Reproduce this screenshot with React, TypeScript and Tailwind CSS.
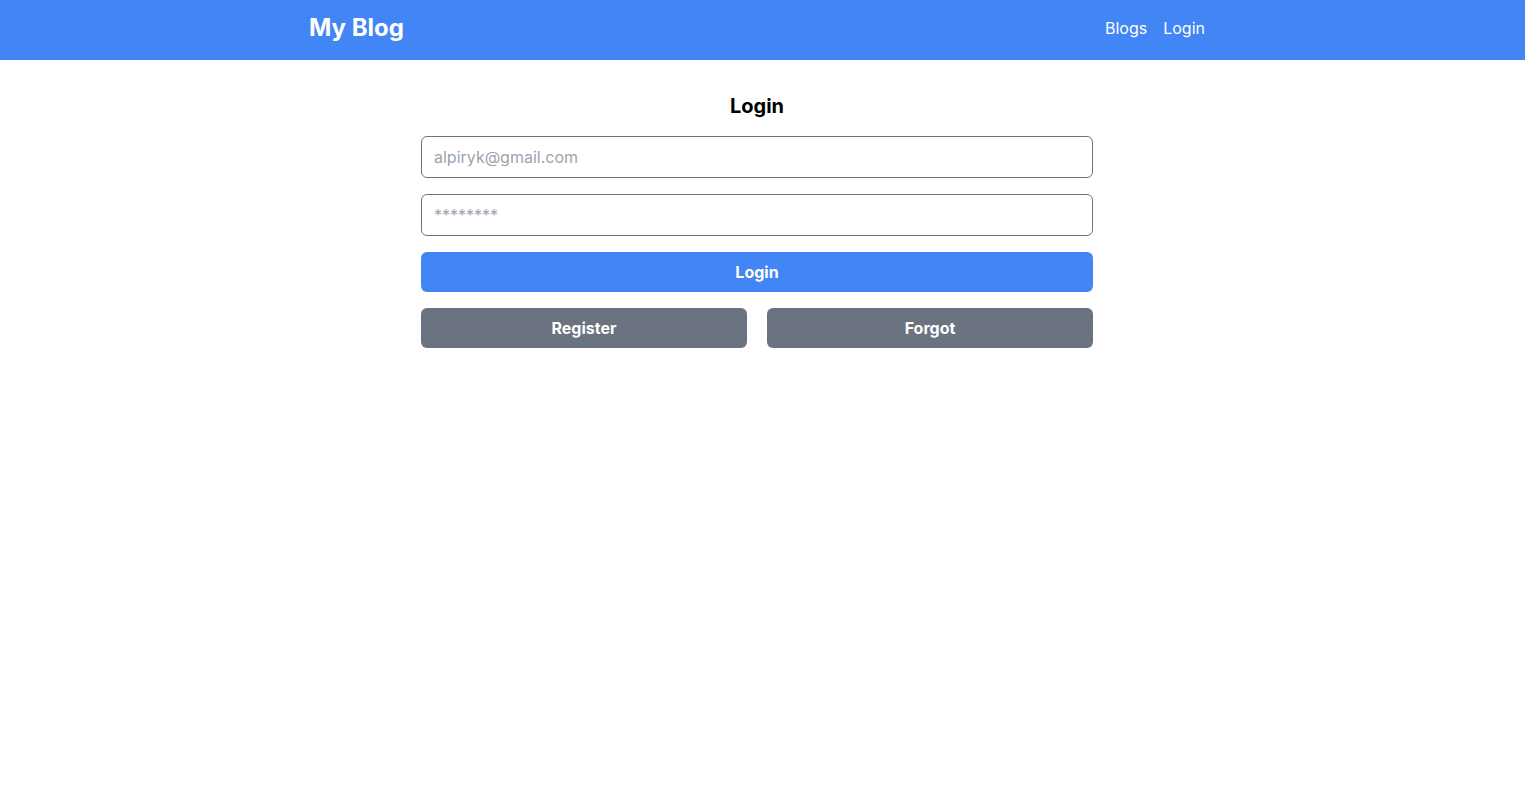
export default function App() {
  return (
    <div className="min-h-screen bg-white" style={{ fontFamily: "Inter, 'Noto Sans', sans-serif" }}>
      <header className="w-full bg-[#4285f4]">
        <div className="w-[1514px]">
          <div className="mx-auto flex h-[60px] max-w-4xl items-center justify-between pb-1">
            <span className="text-2xl font-bold text-white">My Blog</span>
            <nav className="flex gap-4 text-base text-white">
              <a>Blogs</a>
              <a>Login</a>
            </nav>
          </div>
        </div>
      </header>
      <main className="w-[1514px]">
        <div className="mx-auto max-w-2xl pt-8">
          <h1 className="mb-4 text-center text-xl font-bold leading-7 text-black">Login</h1>
          <div className="flex flex-col gap-4">
            <input
              className="w-full rounded-md border border-[#6b7280] px-3 py-2 text-base leading-6 placeholder:text-[#9ca3af] outline-none"
              placeholder="alpiryk@gmail.com"
            />
            <input
              type="password"
              className="w-full rounded-md border border-[#6b7280] px-3 py-2 text-base leading-6 placeholder:text-[#9ca3af] outline-none"
              placeholder="********"
            />
            <button className="w-full rounded-md bg-[#4285f4] py-2 text-base font-bold leading-6 text-white">Login</button>
            <div className="flex gap-5">
              <button className="flex-1 rounded-md bg-[#6b7280] py-2 text-base font-bold leading-6 text-white">Register</button>
              <button className="flex-1 rounded-md bg-[#6b7280] py-2 text-base font-bold leading-6 text-white">Forgot</button>
            </div>
          </div>
        </div>
      </main>
    </div>
  );
}
